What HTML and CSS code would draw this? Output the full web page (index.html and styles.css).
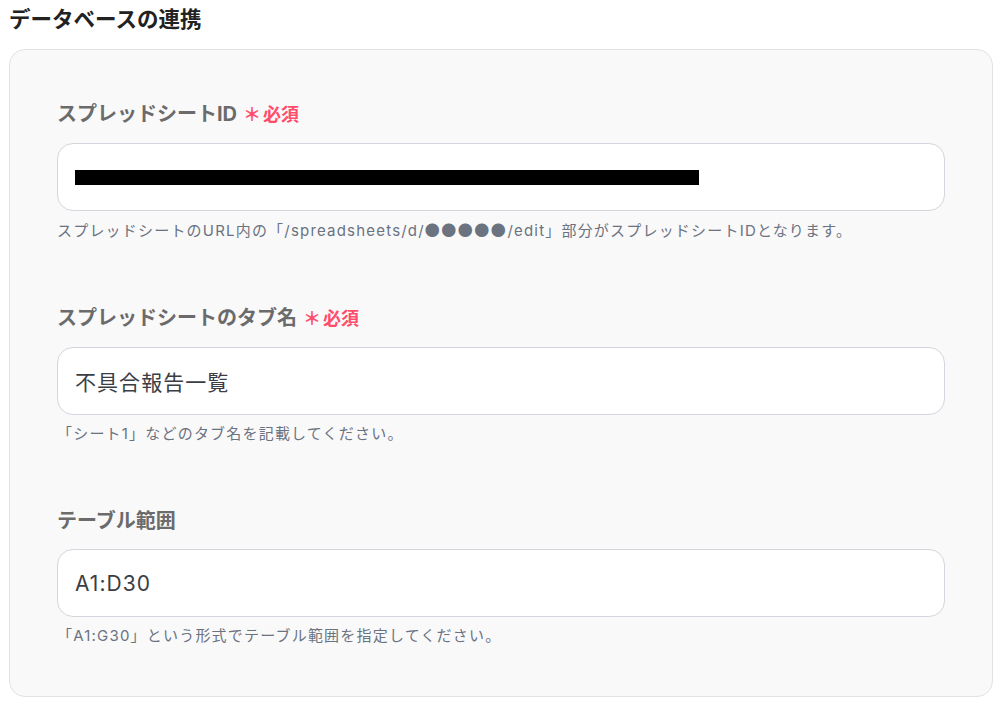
FILE: index.html
```html
<html>
  <head>
    <meta charset="utf-8">
    <link rel="stylesheet" href="styles.css">
  </head>
  <body>
    <div id="page">
      <h1 class="sectionTitle">データベースの連携</h1>
      <div class="panel">
        <!-- spreadsheet id -->
        <div class="field">
          <div class="fieldLabel">スプレッドシートID<span class="required"><span class="star">＊</span>必須</span></div>
          <div class="fieldBox"><span class="redacted"></span></div>
          <div class="fieldHelp">スプレッドシートのURL内の「/spreadsheets/d/<span class="dots">●●●●●</span>/edit」部分がスプレッドシートIDとなります。</div>
        </div>
        <!-- tab name -->
        <div class="field">
          <div class="fieldLabel">スプレッドシートのタブ名<span class="required"><span class="star">＊</span>必須</span></div>
          <div class="fieldBox">不具合報告一覧</div>
          <div class="fieldHelp">「シート1」などのタブ名を記載してください。</div>
        </div>
        <!-- table range -->
        <div class="field">
          <div class="fieldLabel">テーブル範囲</div>
          <div class="fieldBox">A1:D30</div>
          <div class="fieldHelp">「A1:G30」という形式でテーブル範囲を指定してください。</div>
        </div>
      </div>
    </div>
  </body>
</html>
```

FILE: styles.css
```css
body {
  margin: 0;
  background-color: #ffffff;
  font-family: "Inter", "Noto Sans CJK JP", sans-serif;
}

#page {
  padding: 4px 9px 0 9px;
}

.sectionTitle {
  margin: 0 0 15px 0;
  font-size: 21.5px;
  line-height: 30px;
  font-weight: 700;
  color: #222222;
}

.panel {
  background-color: #f9f9fa;
  border: 1px solid #e1e2e6;
  border-radius: 16px;
  padding: 50px 47px 49px 47px;
}

.field {
  margin-bottom: 62px;
}

.field:last-child {
  margin-bottom: 0;
}

.fieldLabel {
  font-size: 20px;
  line-height: 28px;
  font-weight: 700;
  color: #6b6b6b;
  margin-bottom: 14px;
}

.required {
  margin-left: 6px;
  font-size: 18px;
  color: #ff4d6a;
}

.star {
  margin-right: 2px;
}

.fieldBox {
  display: flex;
  align-items: center;
  height: 66px;
  padding: 0 17px;
  background-color: #ffffff;
  border: 1px solid #d3d6dd;
  border-radius: 16px;
  font-size: 21px;
  letter-spacing: 0.05em;
  color: #3a3d44;
}

.redacted {
  display: block;
  width: 624px;
  height: 15px;
  background-color: #000000;
}

.fieldHelp {
  margin-top: 8px;
  font-size: 15px;
  line-height: 22px;
  letter-spacing: 0.08em;
  color: #6b7280;
}

.dots {
  font-family: "Noto Sans CJK JP", sans-serif;
  letter-spacing: 0.1em;
}
```
